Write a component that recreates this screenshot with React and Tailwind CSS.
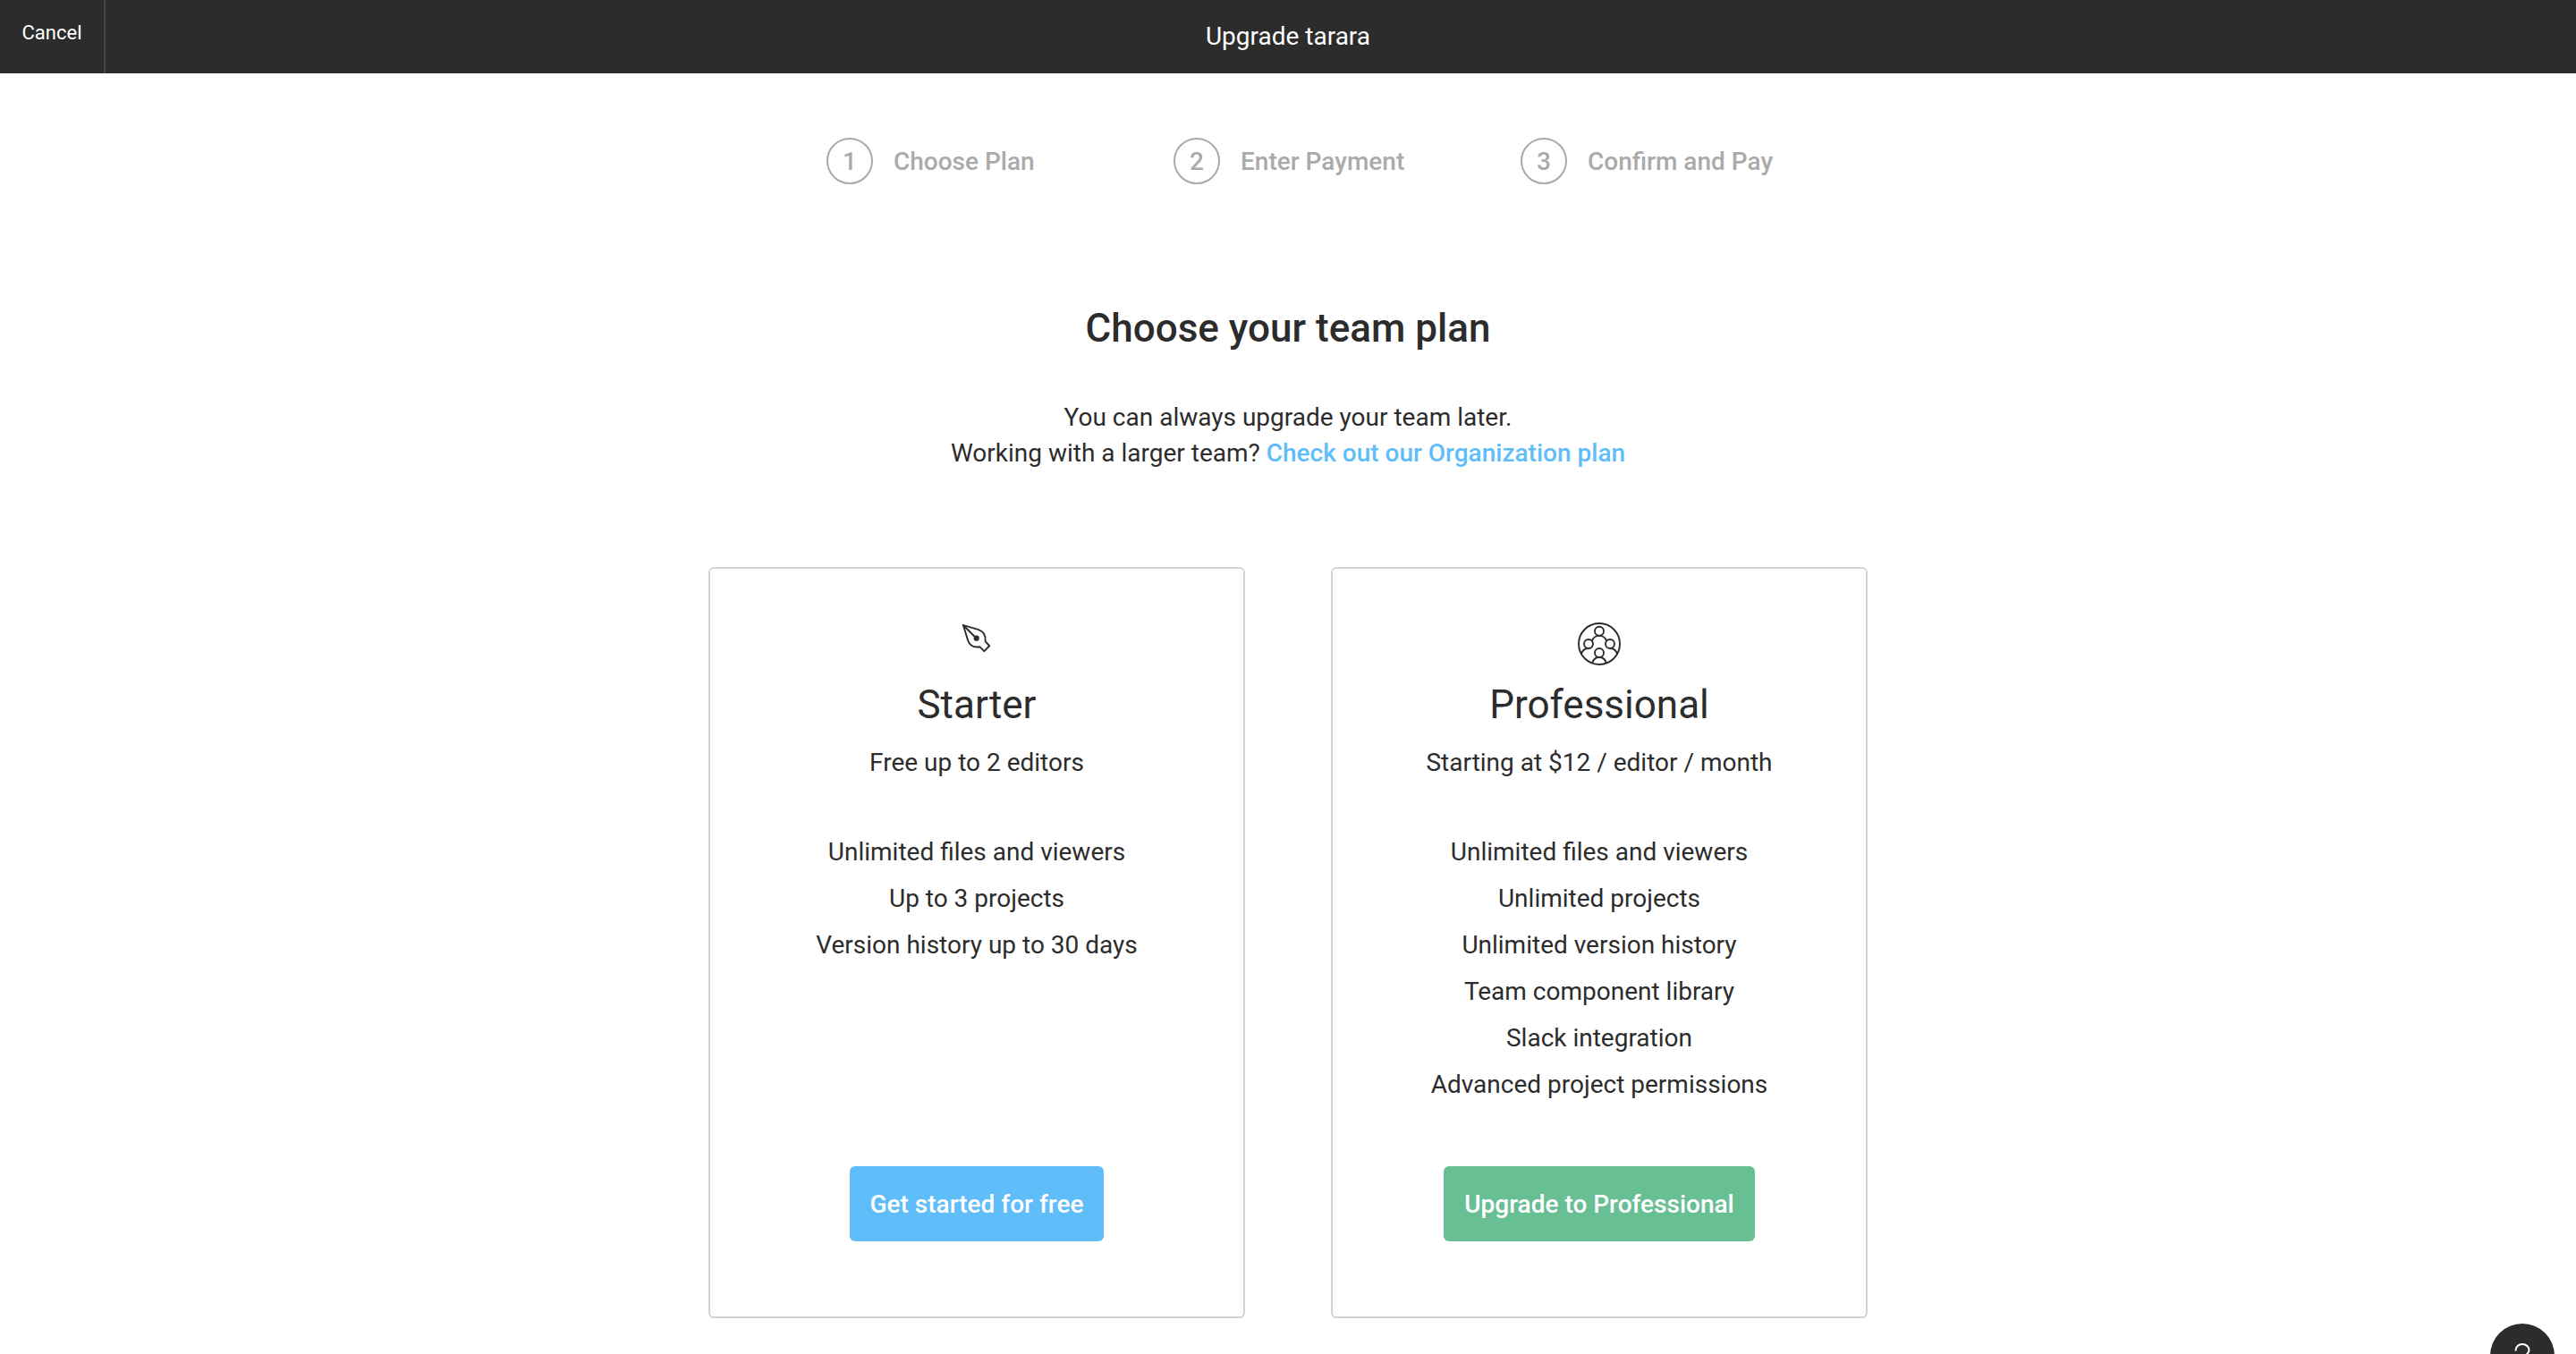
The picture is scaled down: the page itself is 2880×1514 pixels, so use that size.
const steps = ["Choose Plan", "Enter Payment", "Confirm and Pay"];

function PenIcon() {
  return (
    <svg
      className="size-12"
      viewBox="0 0 48 48"
      fill="none"
      stroke="#2c2c2c"
      strokeWidth="1.9"
      aria-hidden="true"
    >
      <path d="M9 3.2 L25.5 7.9 C31.2 9.8 34.4 14.5 33.6 21.2 L38.2 26.3 L32.3 32.1 L27.4 27.2 C20.8 28.2 16.2 26 14.2 20.2 Z" />
      <path d="M9 3.2 L23.7 17.7" />
      <circle cx="23.7" cy="17.7" r="3.1" fill="#2c2c2c" stroke="none" />
    </svg>
  );
}

function TeamIcon() {
  return (
    <svg
      className="size-12"
      viewBox="0 0 48 48"
      fill="none"
      stroke="#2c2c2c"
      strokeWidth="1.9"
      aria-hidden="true"
    >
      <circle cx="24" cy="24" r="23" />
      <circle cx="24" cy="9.8" r="5" />
      <circle cx="12" cy="24" r="5" />
      <circle cx="36" cy="24" r="5" />
      <circle cx="24" cy="34" r="5" />
      <path d="M15.8 20.8 C17.2 17 20.3 14.9 24 14.9 C27.7 14.9 30.8 17 32.2 20.8" />
      <path d="M16.2 45.4 C17.2 41.5 20.2 39 24 39 C27.8 39 30.8 41.5 31.8 45.4" />
      <path d="M3.8 35.5 C5 31.5 8.2 29 12 29" />
      <path d="M44.2 35.5 C43 31.5 39.8 29 36 29" />
    </svg>
  );
}

const plans = [
  {
    name: "Starter",
    price: "Free up to 2 editors",
    Icon: PenIcon,
    features: [
      "Unlimited files and viewers",
      "Up to 3 projects",
      "Version history up to 30 days",
    ],
    action: "Get started for free",
    color: "bg-[#5fbefa]",
  },
  {
    name: "Professional",
    price: "Starting at $12 / editor / month",
    Icon: TeamIcon,
    features: [
      "Unlimited files and viewers",
      "Unlimited projects",
      "Unlimited version history",
      "Team component library",
      "Slack integration",
      "Advanced project permissions",
    ],
    action: "Upgrade to Professional",
    color: "bg-[#68bf94]",
  },
];

function PlanCard({ name, price, Icon, features, action, color }) {
  return (
    <section className="flex flex-col items-center rounded-md border-2 border-[#d3d3d3] pt-[60px] pb-[84px]">
      <Icon />
      <h2 className="mt-[18px] text-[44px] leading-[52px]">{name}</h2>
      <p className="mt-[19px] leading-10">{price}</p>
      <ul className="mt-[54px] mb-[65px] leading-[52px]">
        {features.map((feature) => (
          <li key={feature}>{feature}</li>
        ))}
      </ul>
      <button
        type="button"
        className={`mt-auto h-[84px] rounded-md px-[23px] pt-0.5 font-medium text-white ${color}`}
      >
        {action}
      </button>
    </section>
  );
}

export default function App() {
  return (
    <div className="bg-white text-center font-['Roboto',sans-serif] text-[28px] text-[#2c2c2c]">
      <header className="grid h-[82px] grid-cols-[1fr_auto_1fr] bg-[#2c2c2c] text-white">
        <button
          type="button"
          className="w-[118px] justify-self-start border-r-2 border-[#444] pb-[9px] text-[22px]"
        >
          Cancel
        </button>
        <h1 className="self-center leading-10">Upgrade tarara</h1>
      </header>

      <main className="pb-10">
        <ol className="mx-auto grid max-w-[1164px] grid-cols-3 pt-[72px] font-medium text-[#aaa]">
          {steps.map((label, i) => (
            <li key={label} className="flex items-center gap-[23px] pl-[66px] whitespace-nowrap">
              <span className="flex size-[52px] shrink-0 items-center justify-center rounded-full border-2 border-[#aaa] pt-0.5">
                {i + 1}
              </span>
              <span className="pt-0.5">{label}</span>
            </li>
          ))}
        </ol>

        <h2 className="mt-[135px] text-[44px] leading-[52px] font-medium">
          Choose your team plan
        </h2>
        <p className="mt-[54px] leading-10">
          You can always upgrade your team later.
          <br />
          Working with a larger team?{" "}
          <a href="#organization" className="font-medium text-[#5fbefa]">
            Check out our Organization plan
          </a>
        </p>

        <div className="mx-auto mt-[107px] grid max-w-[1296px] grid-cols-2 gap-24">
          {plans.map((plan) => (
            <PlanCard key={plan.name} {...plan} />
          ))}
        </div>
      </main>

      <button
        type="button"
        aria-label="Help"
        className="fixed right-6 -bottom-[38px] flex size-[72px] items-center justify-center rounded-full bg-[#2c2c2c]"
      >
        <svg className="size-8" viewBox="0 0 32 32" fill="none" stroke="#fff" strokeWidth="2" aria-hidden="true">
          <path d="M8.5 10.5 C8.5 6 11.8 3 16 3 C20.4 3 23.5 6 23.5 9.8 C23.5 15 16 15.5 16 22" />
          <path d="M16 26 V29" />
        </svg>
      </button>
    </div>
  );
}
